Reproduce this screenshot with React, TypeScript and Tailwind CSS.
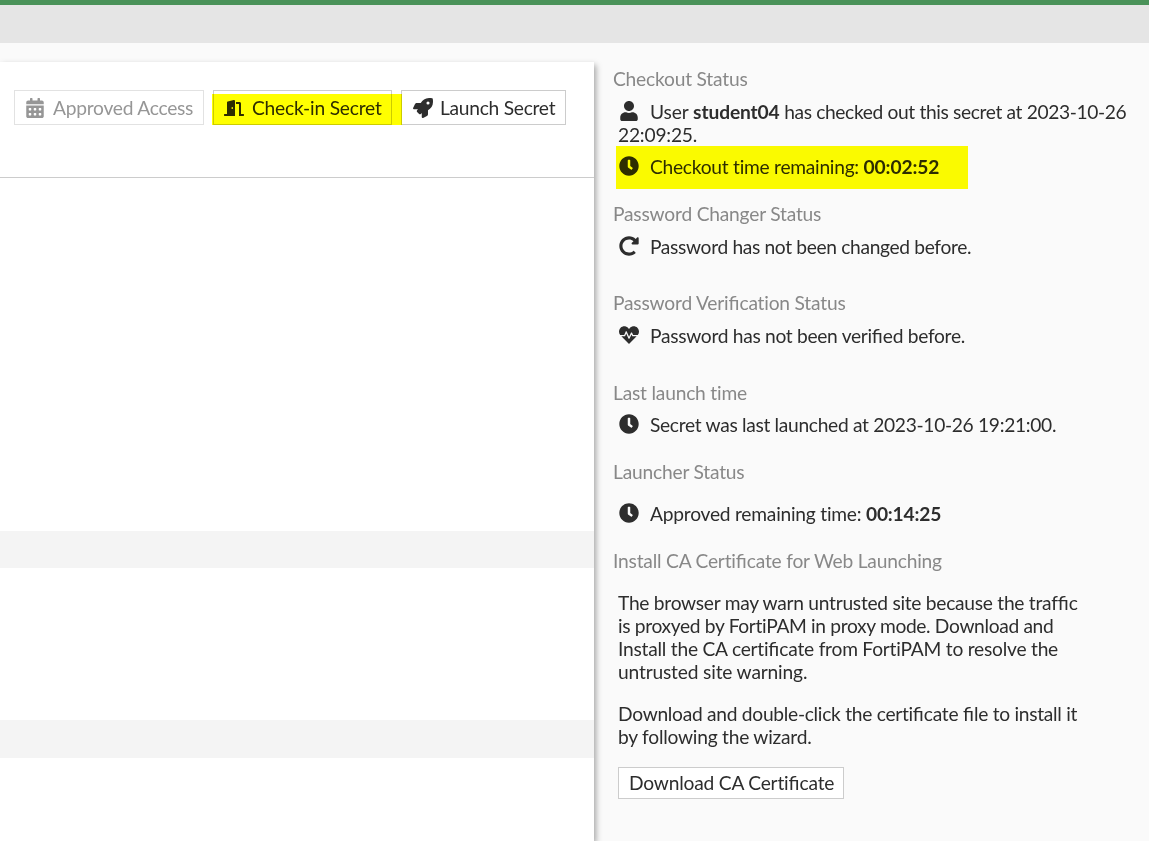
import type { ReactNode } from 'react';
import {
  FaCalendarAlt,
  FaClock,
  FaDoorOpen,
  FaHeartbeat,
  FaRedoAlt,
  FaRocket,
  FaUser,
} from 'react-icons/fa';

function Title({ children }: { children: ReactNode }) {
  return (
    <h2 className="h-[23px] whitespace-nowrap tracking-[-0.2px] text-[#888888]">{children}</h2>
  );
}

function Row({ icon, children }: { icon: ReactNode; children: ReactNode }) {
  return (
    <p className="ml-[5px]">
      <span className="mr-[10px] inline-block h-5 w-[22px] pl-px align-[-2px] text-[20px]">{icon}</span>
      {children}
    </p>
  );
}

/* Keeps the fi ligature inside tracked text. */
function Fi() {
  return <span className="tracking-normal">fi</span>;
}

export default function App() {
  return (
    <div className="flex h-[841px] w-[1149px] flex-col overflow-hidden bg-[#fafafa] font-['Lato',sans-serif] text-[19.2px] leading-[23px] tracking-[-0.2px] text-[#2d2d2d]">
      <header className="h-[43px] shrink-0 border-t-[5px] border-[#4a9259] bg-[#e5e5e5]" />
      <div className="flex min-h-0 flex-1">
        <main className="mr-px mt-[19px] w-[594px] shrink-0 bg-white shadow-[2px_3px_6px_rgba(0,0,0,0.35)]">
          <div className="relative flex h-[116px] items-start border-b border-[#cccccc] pl-[14px] pt-7">
            <button className="flex h-[35px] w-[190px] items-center border border-[#e2e2e2] pl-[10px] tracking-[-0.25px] text-[#969696]">
              <FaCalendarAlt className="mr-2 h-5 w-5 shrink-0" />
              <span className="whitespace-nowrap">Approved Access</span>
            </button>
            <button className="ml-[9px] flex h-[35px] w-[179px] items-center border border-[#cccccc] pl-[10px]">
              <FaDoorOpen className="mr-2 h-5 w-5 shrink-0" />
              <span className="whitespace-nowrap">Check-in Secret</span>
            </button>
            <button className="ml-[9px] flex h-[35px] w-[165px] items-center border border-[#cccccc] pl-[11px] tracking-[-0.27px]">
              <FaRocket className="mr-[7px] h-5 w-5 shrink-0" />
              <span className="whitespace-nowrap">Launch Secret</span>
            </button>
            <div className="absolute left-[212px] top-8 h-[31px] w-[190px] bg-[#ffff00] mix-blend-multiply" />
          </div>
          <div className="mt-[353px] h-[37px] bg-[#f4f4f4]" />
          <div className="mt-[152px] h-[38px] bg-[#f4f4f4]" />
        </main>

        <aside className="relative min-w-0 flex-1 pl-[18px] pt-[24px]">
          <section className="h-[135px]">
            <Title>Checkout Status</Title>
            <div className="mt-[10px] tracking-[-0.36px]">
              <Row icon={<FaUser />}>
                <span className="tracking-[-0.1px]">User </span>
                <b className="tracking-[-0.12px]">student04</b> has checked out this secret at 2023-10-26
                <br />
                <span className="tracking-[-0.2px]">22:09:25.</span>
              </Row>
            </div>
            <div className="mt-[9px] tracking-[-0.26px]">
              <Row icon={<FaClock />}>
                Checkout time remaining: <b className="tracking-[-0.12px]">00:02:52</b>
              </Row>
            </div>
          </section>
          <section className="h-[89px]">
            <Title>Password Changer Status</Title>
            <div className="mt-[10px] tracking-[-0.34px]">
              <Row icon={<FaRedoAlt />}>Password has not been changed before.</Row>
            </div>
          </section>
          <section className="h-[90px]">
            <Title>
              Password Veri
              <Fi />
              cation Status
            </Title>
            <div className="mt-[10px] tracking-[-0.3px]">
              <Row icon={<FaHeartbeat />}>
                Password has not been veri
                <Fi />
                ed before.
              </Row>
            </div>
          </section>
          <section className="h-[79px]">
            <Title>Last launch time</Title>
            <div className="mt-[9px] tracking-[-0.31px]">
              <Row icon={<FaClock />}>Secret was last launched at 2023-10-26 19:21:00.</Row>
            </div>
          </section>
          <section className="h-[89px]">
            <Title>Launcher Status</Title>
            <div className="mt-[19px] tracking-[-0.23px]">
              <Row icon={<FaClock />}>
                Approved remaining time: <b className="tracking-[-0.2px]">00:14:25</b>
              </Row>
            </div>
          </section>
          <section>
            <Title>
              Install CA Certi
              <Fi />
              cate for Web Launching
            </Title>
            <div className="ml-[5px] mt-[19px] w-[480px]">
              <p>
                <span className="tracking-[-0.27px]">
                  The browser may warn untrusted site because the traf
                  <Fi />c
                </span>
                <br />
                <span className="tracking-[-0.34px]">
                  is proxyed by FortiPAM in proxy mode. Download and
                </span>
                <br />
                <span className="tracking-[-0.23px]">
                  Install the CA certi
                  <Fi />
                  cate from FortiPAM to resolve the
                </span>
                <br />
                <span className="tracking-[-0.17px]">untrusted site warning.</span>
              </p>
              <p className="mt-[19px] tracking-[-0.28px]">
                Download and double-click the certi
                <Fi />
                cate <Fi />
                le to install it
                <br />
                <span className="tracking-[-0.24px]">by following the wizard.</span>
              </p>
              <button className="mt-[19px] flex h-8 w-[226px] items-center whitespace-nowrap border border-[#cccccc] bg-white pb-px pl-[10px]">
                Download CA Certi
                <Fi />
                cate
              </button>
            </div>
          </section>
          <div className="absolute left-[21px] top-[103px] h-[43px] w-[352px] bg-[#ffff00] mix-blend-multiply" />
        </aside>
      </div>
    </div>
  );
}
